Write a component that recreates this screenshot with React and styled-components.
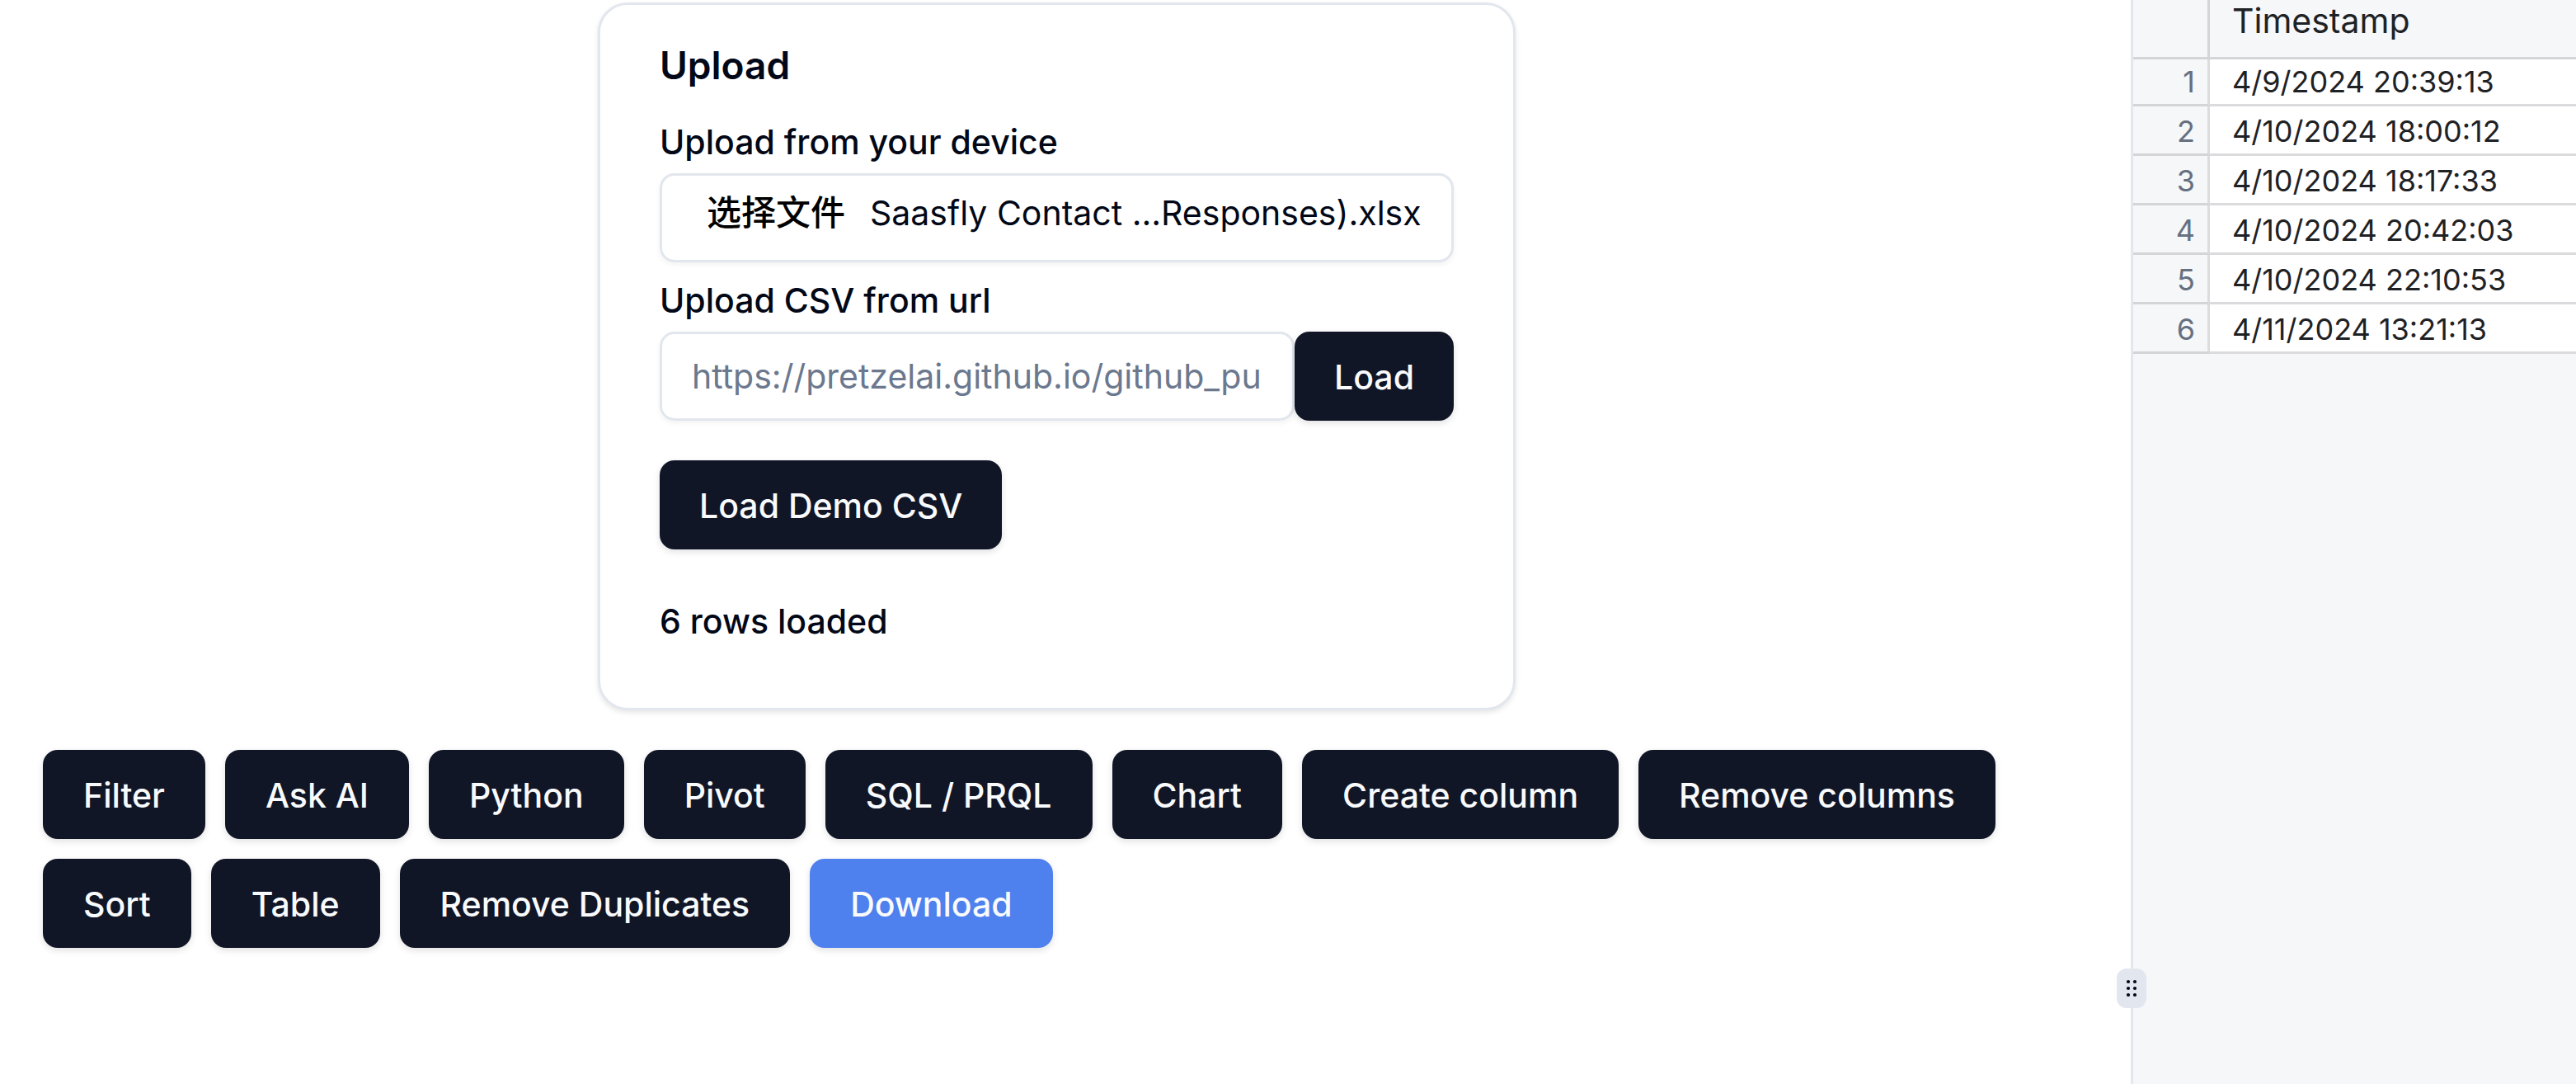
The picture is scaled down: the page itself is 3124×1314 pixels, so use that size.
import React, { useState } from "react";
import styled, { createGlobalStyle } from "styled-components";

const GlobalStyle = createGlobalStyle`
  *, *::before, *::after { box-sizing: border-box; }
  body {
    margin: 0;
    background: #fff;
    color: #020817;
    font-family: Inter, "Noto Sans CJK SC", sans-serif;
    font-size: 41px;
    line-height: 66px;
    -webkit-font-smoothing: antialiased;
  }
  button, input { font: inherit; }
`;

const Page = styled.div`
  display: flex;
  min-height: 100vh;
`;

const Workspace = styled.main`
  flex: 1;
  min-width: 0;
  display: flex;
  flex-direction: column;
  gap: 48px;
  padding: 3px 73px 48px 52px;
`;

const Card = styled.section`
  width: 100%;
  max-width: 1113px;
  align-self: center;
  padding: 48px 72px 72px;
  border: 3px solid #e2e6ed;
  border-radius: 36px;
  background: #fff;
  box-shadow: 0 3px 6px rgba(0, 0, 0, 0.1);
`;

const CardTitle = styled.h2`
  margin: 0 0 46px;
  font-size: 46px;
  line-height: 50px;
  font-weight: 600;
`;

const Fields = styled.div`
  display: flex;
  flex-direction: column;
  gap: 24px;
`;

const Field = styled.div`
  display: flex;
  flex-direction: column;
  gap: 16px;
`;

const FieldLabel = styled.label`
  font-weight: 500;
  line-height: 44px;
`;

const FileBox = styled.div`
  position: relative;
  display: flex;
  align-items: flex-start;
  gap: 12px;
  height: 108px;
  padding: 12px 36px;
  border: 3px solid #e2e6ed;
  border-radius: 18px;
  box-shadow: 0 3px 6px rgba(0, 0, 0, 0.05);
  white-space: nowrap;
`;

const HiddenFile = styled.input`
  position: absolute;
  inset: 0;
  width: 100%;
  height: 100%;
  opacity: 0;
  cursor: pointer;
`;

const ChooseFile = styled.span`
  padding: 0 18px;
  color: #000;
  font-size: 42px;
  font-weight: 500;
`;

const InputRow = styled.div`
  display: flex;
`;

const TextInput = styled.input`
  flex: 1;
  min-width: 0;
  height: 108px;
  padding: 12px 36px;
  border: 3px solid #e2e6ed;
  border-radius: 18px;
  background: transparent;
  color: inherit;
  box-shadow: 0 3px 6px rgba(0, 0, 0, 0.05);
  &::placeholder { color: #6b788e; opacity: 1; }
`;

const Button = styled.button`
  height: 108px;
  padding: 2px 48px 0;
  border: 0;
  border-radius: 18px;
  background: ${(p) => (p.$accent ? "#4e80ee" : "#111627")};
  color: #f8fafc;
  font-weight: 500;
  white-space: nowrap;
  box-shadow: 0 3px 9px rgba(0, 0, 0, 0.12);
  cursor: pointer;
`;

const ToolButton = styled(Button)`
  padding: 2px 49px 0;
`;

const DemoRow = styled.div`
  margin: 48px 0 54px;
  display: flex;
`;

const Status = styled.p`
  margin: 0;
  font-weight: 500;
`;

const Toolbar = styled.div`
  display: flex;
  flex-wrap: wrap;
  gap: 24px;
`;

const Divider = styled.div`
  position: relative;
  flex: 0 0 3px;
  background: #e2e8f0;
`;

const Handle = styled.button`
  position: absolute;
  bottom: 92px;
  left: -17px;
  display: flex;
  align-items: center;
  justify-content: center;
  width: 36px;
  height: 48px;
  padding: 0;
  border: 0;
  border-radius: 12px;
  background: #e2e6ee;
  cursor: col-resize;
`;

const DataPane = styled.aside`
  flex: 0 0 537px;
  overflow: hidden;
  background: #f5f7f9;
`;

const Grid = styled.table`
  width: 100%;
  border-spacing: 0;
  color: #1f2225;
  font-size: 36px;
  line-height: 54px;
`;

const ColumnHead = styled.th`
  padding: 0 27px 19px;
  border-bottom: 3px solid #d3d5d7;
  font-size: 41px;
  line-height: 50px;
  font-weight: 400;
  text-align: left;
`;

const CornerCell = styled.td`
  width: 93px;
  border-right: 3px solid #d3d5d7;
  border-bottom: 3px solid #d3d5d7;
`;

const RowNumber = styled.th`
  padding: 0 15px 0 0;
  border-right: 3px solid #dbdcde;
  border-bottom: 3px solid #d3d5d7;
  color: #667080;
  font-weight: 400;
  text-align: right;
  tr + tr > & { padding-top: 3px; }
`;

const Cell = styled.td`
  padding: 0 27px;
  border-bottom: 3px solid #dbdbdd;
  background: #fff;
  white-space: nowrap;
  tr + tr > & { padding-top: 3px; }
`;

const actions = [
  "Filter",
  "Ask AI",
  "Python",
  "Pivot",
  "SQL / PRQL",
  "Chart",
  "Create column",
  "Remove columns",
  "Sort",
  "Table",
  "Remove Duplicates",
];

const timestamps = [
  "4/9/2024 20:39:13",
  "4/10/2024 18:00:12",
  "4/10/2024 18:17:33",
  "4/10/2024 20:42:03",
  "4/10/2024 22:10:53",
  "4/11/2024 13:21:13",
];

function GripIcon() {
  return (
    <svg width="14" height="22" viewBox="0 0 14 22" fill="#020817" aria-hidden="true">
      {[3, 11, 19].map((y) => (
        <g key={y}>
          <circle cx="3" cy={y} r="2.1" />
          <circle cx="11" cy={y} r="2.1" />
        </g>
      ))}
    </svg>
  );
}

function UploadCard() {
  const [fileName, setFileName] = useState("Saasfly Contact ...Responses).xlsx");
  const [url, setUrl] = useState("");
  return (
    <Card>
      <CardTitle>Upload</CardTitle>
      <Fields>
        <Field>
          <FieldLabel htmlFor="file">Upload from your device</FieldLabel>
          <FileBox>
            <ChooseFile lang="zh-CN">选择文件</ChooseFile>
            <span>{fileName}</span>
            <HiddenFile
              id="file"
              type="file"
              onChange={(e) => e.target.files[0] && setFileName(e.target.files[0].name)}
            />
          </FileBox>
        </Field>
        <Field>
          <FieldLabel htmlFor="url">Upload CSV from url</FieldLabel>
          <InputRow>
            <TextInput
              id="url"
              type="url"
              placeholder="https://pretzelai.github.io/github_pu"
              value={url}
              onChange={(e) => setUrl(e.target.value)}
            />
            <Button type="button">Load</Button>
          </InputRow>
        </Field>
      </Fields>
      <DemoRow>
        <Button type="button">Load Demo CSV</Button>
      </DemoRow>
      <Status>{timestamps.length} rows loaded</Status>
    </Card>
  );
}

function DataGrid() {
  return (
    <Grid>
      <thead>
        <tr>
          <CornerCell />
          <ColumnHead scope="col">Timestamp</ColumnHead>
        </tr>
      </thead>
      <tbody>
        {timestamps.map((value, i) => (
          <tr key={value}>
            <RowNumber scope="row">{i + 1}</RowNumber>
            <Cell>{value}</Cell>
          </tr>
        ))}
      </tbody>
    </Grid>
  );
}

export default function App() {
  return (
    <>
      <GlobalStyle />
      <Page>
        <Workspace>
          <UploadCard />
          <Toolbar>
            {actions.map((name) => (
              <ToolButton type="button" key={name}>{name}</ToolButton>
            ))}
            <ToolButton type="button" $accent>Download</ToolButton>
          </Toolbar>
        </Workspace>
        <Divider>
          <Handle type="button" aria-label="Resize panels">
            <GripIcon />
          </Handle>
        </Divider>
        <DataPane>
          <DataGrid />
        </DataPane>
      </Page>
    </>
  );
}
